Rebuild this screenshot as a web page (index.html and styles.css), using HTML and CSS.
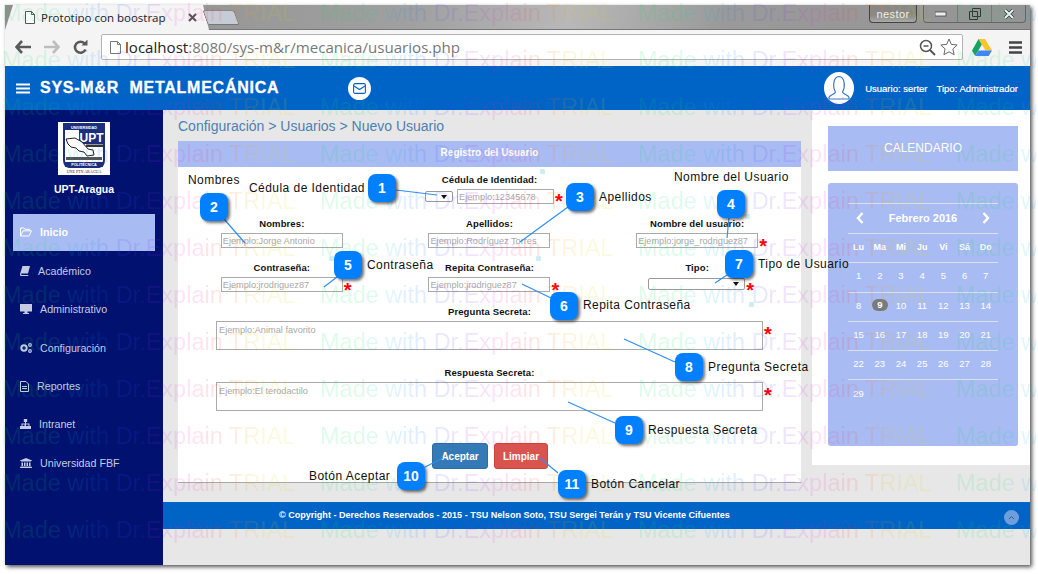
FILE: index.html
```html
<!DOCTYPE html>
<html lang="es">
<head>
<meta charset="utf-8">
<title>Prototipo con boostrap</title>
<link rel="stylesheet" href="styles.css">
</head>
<body>
<div class="window">
  <header class="chrome">
    <div class="tabstrip">
      <div class="tab">
        <svg class="tab-doc" width="10" height="13" viewBox="0 0 10 13"><path d="M.5.5h6l3 3v9h-9zM6.5.5v3h3" fill="#fff" stroke="#555"/></svg>
        <span class="tab-title">Prototipo con boostrap</span>
        <svg class="tab-x" width="9" height="9" viewBox="0 0 9 9"><path d="M1 1l7 7M8 1l-7 7" stroke="#555" stroke-width="2"/></svg>
      </div>
      <div class="newtab"></div>
      <div class="strip-space"></div>
      <div class="user-badge">nestor</div>
      <div class="win-btns">
        <span class="win-btn"><svg width="12" height="6" viewBox="0 0 12 6"><rect x="0" y="1" width="11" height="4" fill="#eee" stroke="#444" stroke-width=".8"/></svg></span>
        <span class="win-btn"><svg width="12" height="12" viewBox="0 0 12 12"><path d="M3.500.5h8v8h-8zM.5 3.500h8v8h-8z" fill="none" stroke="#333"/></svg></span>
        <span class="win-btn win-close"><svg width="12" height="10" viewBox="0 0 12 10"><path d="M2 1l8 8M10 1L2 9" stroke="#333" stroke-width="3.400"/><path d="M2 1l8 8M10 1L2 9" stroke="#f4f4f4" stroke-width="2"/></svg></span>
      </div>
    </div>
    <div class="toolbar">
      <svg class="tool" width="16" height="14" viewBox="0 0 16 14"><path d="M7 1L1.500 7 7 13M2 7h14" fill="none" stroke="#5a5a5a" stroke-width="2.600"/></svg>
      <svg class="tool" width="16" height="14" viewBox="0 0 16 14"><path d="M9 1l5.500 6L9 13M14 7H0" fill="none" stroke="#bdbdbd" stroke-width="2.600"/></svg>
      <svg class="tool" width="15" height="15" viewBox="0 0 15 15"><path d="M12.500 9.500A5.500 5.500 0 1 1 11.500 3.500" fill="none" stroke="#5a5a5a" stroke-width="2.600"/><path d="M8.500 5.500h6v-6z" fill="#5a5a5a"/></svg>
      <div class="omnibox">
        <svg width="11" height="13" viewBox="0 0 11 13"><path d="M.5.5h7l3 3v9H.5zM7.500.5v3h3" fill="#fff" stroke="#777"/></svg>
        <span class="url"><span class="url-host">localhost</span>:8080/sys-m&amp;r/mecanica/usuarios.php</span>
        <svg class="omni-zoom" width="17" height="17" viewBox="0 0 17 17"><circle cx="7" cy="7" r="5.500" fill="none" stroke="#555" stroke-width="1.500"/><path d="M4.500 7h5" stroke="#555" stroke-width="1.500"/><path d="M11 11l5 5" stroke="#555" stroke-width="2"/></svg>
        <svg width="18" height="18" viewBox="0 0 18 18"><path d="M9 1l2.400 5.400 5.800.6-4.300 3.900 1.200 5.800L9 13.800l-5.100 2.900 1.200-5.800L.8 7l5.800-.6z" fill="#fff" stroke="#666"/></svg>
      </div>
      <svg class="drive" width="20" height="17" viewBox="0 0 20 17"><path d="M6.500 0h6.500l7 11.500h-6.500z" fill="#f7c52c"/><path d="M6.500 0L0 11.500 3.200 17 9.800 5.500z" fill="#19a15f"/><path d="M3.200 17h13.500l3.300-5.500H6.500z" fill="#4285f4"/></svg>
      <svg class="menu-ico" width="13" height="13" viewBox="0 0 13 13"><path d="M0 1.500h13M0 6.500h13M0 11.500h13" stroke="#444" stroke-width="2.600"/></svg>
    </div>
  </header>

  <div class="topbar">
    <svg class="burger" width="14" height="11" viewBox="0 0 14 11"><path d="M0 1.500h14M0 5.500h14M0 9.500h14" stroke="#fff" stroke-width="2"/></svg>
    <span class="brand">SYS-M&amp;R&nbsp; METALMECÁNICA</span>
    <span class="mail"><svg width="13" height="11" viewBox="0 0 13 11"><rect x=".6" y=".6" width="11.800" height="9.800" rx="1.500" fill="none" stroke="#0063c6" stroke-width="1.100"/><path d="M1 3l5.500 3.500L12 3" fill="none" stroke="#0063c6" stroke-width="1.100"/></svg></span>
    <span class="avatar"><svg width="22" height="26" viewBox="0 0 22 26"><path d="M7.500 17C4.500 12 5 2 11 1.500 17 2 17.500 12 14.500 17c0 2 6.500 3 6.500 5.500v1.500H1v-1.500C1 20 7.500 19 7.500 17z" fill="none" stroke="#3b78c4" stroke-width="1.200"/></svg></span>
    <span class="user-info">Usuario: serter</span>
    <span class="user-info">Tipo: Administrador</span>
  </div>

  <div class="body-row">
    <aside class="sidebar">
      <svg class="logo" width="52" height="53" viewBox="0 0 52 53">
        <rect width="52" height="53" fill="#fff"/>
        <path d="M6 2h40v36c0 5-2 6-5 7H11c-3-1-5-2-5-7z" fill="#fff" stroke="#1c2f7c" stroke-width="2"/>
        <rect x="6" y="2" width="40" height="6" fill="#1c2f7c"/>
        <text x="26" y="6.800" class="logo-small">UNIVERSIDAD</text>
        <rect x="21" y="8" width="25" height="14" fill="#1c2f7c"/>
        <text x="33.500" y="20" class="logo-upt">UPT</text>
        <path d="M8 17l9-1 7 4 6 7 5 1 1 5-7 1-3-4-5-1-3-3-5-1-3-3z" fill="#fff" stroke="#222" stroke-width="1"/>
        <rect x="28" y="22.500" width="17" height="2.500" fill="#333"/>
        <rect x="8" y="35" width="36" height="3" fill="#555"/>
        <rect x="7" y="40" width="38" height="5" fill="#1c2f7c"/>
        <text x="26" y="44" class="logo-small">POLITÉCNICA</text>
        <text x="26" y="51" class="logo-tiny">UNE PTN  ARAGUA</text>
      </svg>
      <div class="school">UPT-Aragua</div>
      <nav class="nav">
        <a class="nav-item active"><svg width="12" height="10" viewBox="0 0 12 10"><path d="M.5 9V1h3.500l1 1.300h4.500v1.500M.5 9L3 3.800h8.500L9 9z" fill="none" stroke="#fff" stroke-width="1"/></svg>Inicio</a>
        <a class="nav-item"><svg width="10" height="10" viewBox="0 0 10 10"><path d="M2.500 0H10L8 7.500H1.500C1 7.500 1 9 1.800 9H8.500L8 10H1C0 10 0 9 0 8z" fill="#c5cbe2"/></svg>Académico</a>
        <a class="nav-item"><svg width="12" height="10" viewBox="0 0 12 10"><path d="M0 0h12v7.500H0zM4.500 7.500h3V9H9v1H3V9h1.500z" fill="#c5cbe2"/></svg>Administrativo</a>
        <a class="nav-item"><svg width="12" height="10" viewBox="0 0 12 10"><circle cx="4" cy="5" r="2.700" fill="none" stroke="#c5cbe2" stroke-width="2"/><circle cx="10" cy="2" r="1.300" fill="none" stroke="#c5cbe2" stroke-width="1.200"/><circle cx="10" cy="8" r="1.300" fill="none" stroke="#c5cbe2" stroke-width="1.200"/></svg>Configuración</a>
        <a class="nav-item"><svg width="9" height="11" viewBox="0 0 9 11"><path d="M.5.5h5.500l2.500 2.500v7.500H.500zM2 5.500h5M2 7.500h5" fill="none" stroke="#c5cbe2"/></svg>Reportes</a>
        <a class="nav-item"><svg width="11" height="10" viewBox="0 0 11 10"><path d="M3.800 0h3.400v3H6v1.500h3.500V7h1.500v3H7V7h1.500V5.500h-2.500V7h1v3H3.500V7h1V5.500H2.500V7H4v3H0V7h1.500V4.500H5V3H3.800z" fill="#c5cbe2"/></svg>Intranet</a>
        <a class="nav-item"><svg width="12" height="10" viewBox="0 0 12 10"><path d="M6 0l6 2.500V3H0v-.5zM1 3.500h10V4H1zM1.500 4.500h1.500v3.500H1.500zM4 4.500h1.500v3.500H4zM6.500 4.500H8v3.500H6.500zM9 4.500h1.500v3.500H9zM.5 8.500h11v.7H.5zM0 9.300h12v.7H0z" fill="#c5cbe2"/></svg>Universidad FBF</a>
      </nav>
    </aside>

    <main class="content">
      <div class="columns">
        <section class="main-col">
          <div class="crumbs">Configuración &gt; Usuarios &gt; Nuevo Usuario</div>
          <form class="panel">
            <div class="panel-head">Registro del Usuario</div>
            <div class="form-row single">
              <div class="field">
                <label class="lbl">Cédula de Identidad:</label>
                <div class="ctl">
                  <div class="sel-wrap sel-small"><select class="sel"></select><i class="caret"></i></div>
                  <input class="inp inp-id" placeholder="Ejemplo:12345678">
                  <span class="star star-first">*</span>
                </div>
              </div>
            </div>
            <div class="form-row triple">
              <div class="field">
                <label class="lbl">Nombres:</label>
                <div class="ctl"><input class="inp" placeholder="Ejemplo:Jorge Antonio"></div>
              </div>
              <div class="field">
                <label class="lbl">Apellidos:</label>
                <div class="ctl"><input class="inp" placeholder="Ejemplo:Rodríguez Torres"></div>
              </div>
              <div class="field">
                <label class="lbl">Nombre del usuario:</label>
                <div class="ctl"><input class="inp" placeholder="Ejemplo:jorge_rodriguez87"><span class="star">*</span></div>
              </div>
            </div>
            <div class="form-row triple">
              <div class="field">
                <label class="lbl">Contraseña:</label>
                <div class="ctl"><input class="inp" placeholder="Ejemplo:jrodriguez87"><span class="star">*</span></div>
              </div>
              <div class="field">
                <label class="lbl">Repita Contraseña:</label>
                <div class="ctl"><input class="inp" placeholder="Ejemplo:jrodriguez87"><span class="star">*</span></div>
              </div>
              <div class="field">
                <label class="lbl">Tipo:</label>
                <div class="ctl"><div class="sel-wrap sel-wide"><select class="sel"></select><i class="caret"></i></div><span class="star">*</span></div>
              </div>
            </div>
            <div class="form-row single">
              <div class="field">
                <label class="lbl">Pregunta Secreta:</label>
                <div class="ctl"><textarea class="area" placeholder="Ejemplo:Animal favorito"></textarea><span class="star">*</span></div>
              </div>
            </div>
            <div class="form-row single row-gap-lg">
              <div class="field">
                <label class="lbl">Respuesta Secreta:</label>
                <div class="ctl"><textarea class="area" placeholder="Ejemplo:El terodactilo"></textarea><span class="star">*</span></div>
              </div>
            </div>
            <div class="actions">
              <button type="button" class="btn btn-ok">Aceptar</button>
              <button type="button" class="btn btn-clear">Limpiar</button>
            </div>
          </form>
        </section>
        <aside class="side-col">
          <div class="cal-title">CALENDARIO</div>
          <div class="cal">
            <div class="cal-nav">
              <svg width="8" height="12" viewBox="0 0 8 12"><path d="M6.500 1L2 6l4.500 5" fill="none" stroke="#fff" stroke-width="2.400"/></svg>
              <span class="cal-month">Febrero 2016</span>
              <svg width="8" height="12" viewBox="0 0 8 12"><path d="M1.500 1L6 6l-4.500 5" fill="none" stroke="#fff" stroke-width="2.400"/></svg>
            </div>
            <div class="cal-row cal-names"><span>Lu</span><span>Ma</span><span>Mi</span><span>Ju</span><span>Vi</span><span>Sá</span><span>Do</span></div>
            <div class="cal-row"><span>1</span><span>2</span><span>3</span><span>4</span><span>5</span><span>6</span><span>7</span></div>
            <div class="cal-row"><span>8</span><span><b class="today">9</b></span><span>10</span><span>11</span><span>12</span><span>13</span><span>14</span></div>
            <div class="cal-row"><span>15</span><span>16</span><span>17</span><span>18</span><span>19</span><span>20</span><span>21</span></div>
            <div class="cal-row"><span>22</span><span>23</span><span>24</span><span>25</span><span>26</span><span>27</span><span>28</span></div>
            <div class="cal-row"><span>29</span></div>
          </div>
        </aside>
      </div>
      <footer class="footer">
        <span class="foot-text">© Copyright - Derechos Reservados - 2015 - TSU Nelson Soto, TSU Sergei Terán y TSU Vicente Cifuentes</span>
        <span class="to-top"><svg width="7" height="5" viewBox="0 0 7 5"><path d="M1 4l2.500-2.500L6 4" fill="none" stroke="#3a5f8f" stroke-width="1"/></svg></span>
      </footer>
    </main>
  </div>
</div>

<div class="watermark" aria-hidden="true">
  <div class="wm-row"><span>Made with Dr.Explain TRIAL</span><span>Made with Dr.Explain TRIAL</span><span>Made with Dr.Explain TRIAL</span><span>Made w</span></div>
  <div class="wm-row"><span>Made with Dr.Explain TRIAL</span><span>Made with Dr.Explain TRIAL</span><span>Made with Dr.Explain TRIAL</span><span>Made w</span></div>
  <div class="wm-row"><span>Made with Dr.Explain TRIAL</span><span>Made with Dr.Explain TRIAL</span><span>Made with Dr.Explain TRIAL</span><span>Made w</span></div>
  <div class="wm-row"><span>Made with Dr.Explain TRIAL</span><span>Made with Dr.Explain TRIAL</span><span>Made with Dr.Explain TRIAL</span><span>Made w</span></div>
  <div class="wm-row"><span>Made with Dr.Explain TRIAL</span><span>Made with Dr.Explain TRIAL</span><span>Made with Dr.Explain TRIAL</span><span>Made w</span></div>
  <div class="wm-row"><span>Made with Dr.Explain TRIAL</span><span>Made with Dr.Explain TRIAL</span><span>Made with Dr.Explain TRIAL</span><span>Made w</span></div>
  <div class="wm-row"><span>Made with Dr.Explain TRIAL</span><span>Made with Dr.Explain TRIAL</span><span>Made with Dr.Explain TRIAL</span><span>Made w</span></div>
  <div class="wm-row"><span>Made with Dr.Explain TRIAL</span><span>Made with Dr.Explain TRIAL</span><span>Made with Dr.Explain TRIAL</span><span>Made w</span></div>
  <div class="wm-row"><span>Made with Dr.Explain TRIAL</span><span>Made with Dr.Explain TRIAL</span><span>Made with Dr.Explain TRIAL</span><span>Made w</span></div>
  <div class="wm-row"><span>Made with Dr.Explain TRIAL</span><span>Made with Dr.Explain TRIAL</span><span>Made with Dr.Explain TRIAL</span><span>Made w</span></div>
  <div class="wm-row"><span>Made with Dr.Explain TRIAL</span><span>Made with Dr.Explain TRIAL</span><span>Made with Dr.Explain TRIAL</span><span>Made w</span></div>
  <div class="wm-row"><span>Made with Dr.Explain TRIAL</span><span>Made with Dr.Explain TRIAL</span><span>Made with Dr.Explain TRIAL</span><span>Made w</span></div>
</div>

<div class="notes">
  <svg class="leaders" width="1038" height="574" viewBox="0 0 1038 574">
    <path d="M396 190L437 195M224 219L245 243M568 207L520 242M729 218L727 238M337 277L324 287M522 284L551 298M727 275L715 283M675 362L624 339M615 423L568 402M425 467L443 458M558 473L540 458"/>
  </svg>
  <i class="dot d1"></i><i class="dot d2"></i><i class="dot d3"></i><i class="dot d4"></i><i class="dot d5"></i><i class="dot d6"></i>
  <span class="bubble b1">1</span><span class="bubble b2">2</span><span class="bubble b3">3</span><span class="bubble b4">4</span><span class="bubble b5">5</span><span class="bubble b6">6</span><span class="bubble b7">7</span><span class="bubble b8">8</span><span class="bubble b9">9</span><span class="bubble b10">10</span><span class="bubble b11">11</span>
  <span class="note n1">Cédula de Identidad</span>
  <span class="note n2">Nombres</span>
  <span class="note n3">Apellidos</span>
  <span class="note n4">Nombre del Usuario</span>
  <span class="note n5">Contraseña</span>
  <span class="note n6">Repita Contraseña</span>
  <span class="note n7">Tipo de Usuario</span>
  <span class="note n8">Pregunta Secreta</span>
  <span class="note n9">Respuesta Secreta</span>
  <span class="note n10">Botón Aceptar</span>
  <span class="note n11">Botón Cancelar</span>
</div>
</body>
</html>
```
FILE: styles.css
```css
* { box-sizing: border-box; }
html, body { margin: 0; height: 100%; }
body {
  position: relative;
  width: 1038px;
  height: 574px;
  overflow: hidden;
  background: #fff;
  font-family: "Liberation Sans", Arial, sans-serif;
  color: #111;
}
.window {
  margin: 5px 0 0 5px;
  width: 1025px;
  height: 560px;
  display: flex;
  flex-direction: column;
  box-shadow: 2px 2px 4px #555;
}

/* browser chrome */
.chrome { height: 61px; flex: none; display: flex; flex-direction: column; }
.tabstrip {
  height: 25px;
  display: flex;
  align-items: flex-start;
  background: linear-gradient(100deg, #8e8e8e 0%, #a0a0a0 40%, #b8b8b8 55%, #9a9a9a 70%, #949494 100%);
  border-bottom: 1px solid #777;
}
.tab {
  width: 204px;
  height: 25px;
  flex: none;
  display: flex;
  align-items: center;
  padding: 0 12px 0 20px;
  background: #f4f4f4;
  clip-path: polygon(0 100%, 8px 0, 198px 0, 100% 100%);
}
.tab-doc { flex: none; margin-right: 6px; }
.tab-title { flex: 1; font: 11.500px "Open Sans", sans-serif; color: #222; white-space: nowrap; }
.tab-x { flex: none; }
.newtab {
  width: 32px;
  height: 15px;
  margin: 5px 0 0 -4px;
  background: #c6ccd6;
  border: 1px solid #777;
  border-top-color: #888;
  border-radius: 3px 3px 2px 2px;
  transform: skewX(20deg);
}
.strip-space { flex: 1; }
.user-badge {
  width: 48px;
  height: 18px;
  margin-right: 6px;
  border: 1px solid #444;
  border-top: 0;
  border-radius: 0 0 4px 4px;
  background: linear-gradient(#888 0 60%, #aaa);
  color: #f1f1f1;
  font: 11px/18px "Liberation Sans", sans-serif;
  letter-spacing: .4px;
  text-align: center;
}
.win-btns {
  width: 103px;
  height: 18px;
  margin-right: 4px;
  display: flex;
  border: 1px solid #666;
  border-top: 0;
  border-radius: 0 0 4px 4px;
}
.win-btn {
  flex: 1;
  display: flex;
  align-items: center;
  justify-content: center;
  border-left: 1px solid #777;
}
.win-btn:first-child { border-left: 0; }
.toolbar {
  height: 36px;
  display: flex;
  align-items: center;
  padding: 0 11px 2px 9px;
  background: #f4f4f4;
}
.tool { flex: none; margin-right: 13px; }
.tool:first-child { margin-left: 1px; }
.omnibox {
  width: 862px;
  height: 26px;
  flex: none;
  display: flex;
  align-items: center;
  gap: 4px;
  padding: 0 4px 0 8px;
  background: #fff;
  border: 1px solid #b4b4b4;
  border-radius: 2px;
}
.url { flex: 1; font: 15.100px "Open Sans", sans-serif; color: #777; white-space: nowrap; }
.url-host { color: #222; }
.drive { flex: none; margin-left: 9px; }
.menu-ico { flex: none; margin-left: 17px; }

/* top bar */
.topbar {
  height: 44px;
  flex: none;
  display: flex;
  align-items: center;
  padding: 0 12px 0 11px;
  background: #0063c6;
  color: #fff;
}
.burger { flex: none; margin-right: 10px; }
.brand { font-weight: bold; font-size: 16px; letter-spacing: .75px; white-space: nowrap; -webkit-text-stroke: .3px #fff; }
.mail {
  width: 23px;
  height: 23px;
  margin-left: 69px;
  border-radius: 50%;
  background: #fff;
  display: flex;
  align-items: center;
  justify-content: center;
}
.avatar {
  width: 30px;
  height: 32px;
  margin-left: auto;
  margin-right: 11px;
  border-radius: 50%;
  background: #fff;
  display: flex;
  align-items: center;
  justify-content: center;
}
.user-info { font-size: 9.500px; margin-right: 9px; white-space: nowrap; -webkit-text-stroke: .2px #fff; }
.user-info:last-child { margin-right: 0; }

/* layout */
.body-row { flex: 1; min-height: 0; display: flex; }
.sidebar { width: 158px; flex: none; background: #001170; padding-top: 12px; text-align: center; }
.logo { display: block; margin: 0 auto 0 53px; }
.logo-small { font: bold 3.800px "Liberation Sans", sans-serif; fill: #fff; text-anchor: middle; }
.logo-upt { font: bold 12px "Liberation Sans", sans-serif; fill: #fff; text-anchor: middle; }
.logo-tiny { font: 4px "Liberation Serif", serif; fill: #222; text-anchor: middle; }
.school { margin: 7px 0 18px; font-size: 10.500px; font-weight: bold; color: #fff; line-height: 14px; }
.nav { display: flex; flex-direction: column; padding: 0 8px; }
.nav-item {
  height: 38.300px;
  display: flex;
  align-items: center;
  gap: 8px;
  padding-left: 7px;
  color: #c5cbe2;
  font-size: 10.700px;
}
.nav-item.active { background: #a9bbf3; color: #fff; font-weight: bold; height: 37px; margin-bottom: 1px; padding-bottom: 2px; }
.nav-item svg { flex: none; }

.content { flex: 1; min-width: 0; display: flex; flex-direction: column; background: #e7e7e7; }
.columns { height: 392px; flex: none; display: flex; }
.main-col { width: 649px; flex: none; padding: 0 11px 0 15px; }
.crumbs { height: 31px; font-size: 14px; line-height: 32px; color: #4d7fb3; }
.panel {
  background: #fff;
  border-bottom: 1px solid #aaa;
  padding-bottom: 13px;
}
.panel-head {
  height: 26px;
  background: #a9bbf3;
  color: #fff;
  font-size: 10px;
  font-weight: bold;
  line-height: 23px;
  text-align: center;
}
.form-row { margin-top: 13px; }
.form-row.triple { display: grid; grid-template-columns: repeat(3, 1fr); }
.panel-head + .form-row { margin-top: 6px; }
.row-gap-lg { margin-top: 16px; }
.field { display: flex; flex-direction: column; align-items: center; }
.lbl { height: 13px; margin-bottom: 3px; font-size: 9.500px; font-weight: bold; line-height: 14px; letter-spacing: .1px; color: #111; }
.ctl { position: relative; display: flex; align-items: flex-start; gap: 4px; }
.inp {
  width: 122px;
  height: 15px;
  padding: 0 1px;
  border: 1px solid #aaa;
  border-radius: 0;
  font: 9.200px "Liberation Sans", sans-serif;
  outline: 0;
}
.inp-id { width: 97px; }
.inp::placeholder, .area::placeholder { color: #a9a9a9; opacity: 1; }
.area {
  display: block;
  width: 547px;
  height: 29px;
  padding: 3px 2px 2px;
  border: 1px solid #aaa;
  border-radius: 0;
  resize: none;
  font: 9.200px "Liberation Sans", sans-serif;
  outline: 0;
}
.sel-wrap { position: relative; flex: none; }
.sel-small { width: 28px; height: 11px; margin-top: 2px; }
.sel-wide { width: 97px; height: 12px; margin-top: 1px; margin-left: -1px; }
.sel {
  display: block;
  appearance: none;
  width: 100%;
  height: 100%;
  padding: 0;
  border: 1px solid #999;
  border-radius: 2px;
  background: #fff;
}
.caret {
  position: absolute;
  right: 6px;
  top: 4px;
  border: 3px solid transparent;
  border-top: 4px solid #111;
  border-bottom: 0;
}
.star {
  position: absolute;
  left: 100%;
  top: 3px;
  margin-left: 1px;
  color: #f00;
  font-size: 20px;
  font-weight: bold;
  line-height: 20px;
}
.star-first { top: 2px; }
.actions { display: flex; justify-content: flex-start; gap: 6px; margin-top: 32px; padding-left: 254px; }
.btn {
  height: 26px;
  padding: 0;
  border: 1px solid transparent;
  border-radius: 3px;
  color: #fff;
  font: bold 10px "Liberation Sans", sans-serif;
}
.btn-ok { width: 56px; background: #337ab7; border-color: #2e6da4; }
.btn-clear { width: 54px; background: #d9534f; border-color: #d43f3a; }

/* calendar column */
.side-col { width: 218px; height: 355px; flex: none; padding: 16px 12px 0 16px; background: #fff; }
.cal-title {
  height: 45px;
  background: #a9bbf3;
  color: #fff;
  font-size: 12px;
  line-height: 45px;
  text-align: center;
}
.cal {
  height: 263px;
  margin-top: 12px;
  padding: 20px 20px 0;
  border-radius: 3px;
  background: #a9bbf3;
  color: #fff;
}
.cal-nav {
  height: 30px;
  display: flex;
  align-items: center;
  justify-content: space-between;
  padding: 0 8px 2px;
  border-top: 1px solid #dbe0ee;
}
.cal-month { font-size: 11px; font-weight: bold; }
.cal-row {
  height: 29.300px;
  display: grid;
  grid-template-columns: repeat(7, 21.200px);
  align-items: center;
  justify-items: center;
  padding-bottom: 3px;
  border-top: 1px solid #dbe0ee;
  font-size: 9.500px;
}
.cal-names { font-weight: bold; font-size: 9px; }
.today {
  display: block;
  width: 16px;
  height: 12px;
  border-radius: 6px;
  background: #7a7a7a;
  line-height: 12px;
  text-align: center;
}

/* footer */
.footer {
  height: 27px;
  display: flex;
  align-items: center;
  padding: 0 11px 0 116px;
  background: #0063c6;
  color: #fff;
}
.foot-text { flex: 1; font-size: 9.060px; font-weight: bold; line-height: 27px; white-space: nowrap; }
.to-top {
  width: 15px;
  height: 15px;
  margin-top: 3px;
  border-radius: 50%;
  background: #6d9fdc;
  display: flex;
  align-items: center;
  justify-content: center;
}

/* watermark laid over the whole capture */
.watermark {
  position: absolute;
  left: 2px;
  top: -10px;
  width: 1036px;
  display: flex;
  flex-direction: column;
  pointer-events: none;
  opacity: .12;
}
.wm-row { height: 47px; display: flex; flex: none; }
.wm-row span {
  width: 318px;
  flex: none;
  font-size: 23.500px;
  line-height: 47px;
  white-space: nowrap;
  background: linear-gradient(90deg, #00e05a 0 14%, #00c8e8 22%, #1464ff 35%, #7a28ff 48%, #ff20d0 62%, #ff2828 72%, #ff9a00 82%, #d8d800 90%);
  background-size: 295px 100%;
  background-repeat: no-repeat;
  -webkit-background-clip: text;
  background-clip: text;
  color: transparent;
}
.wm-row span:last-child { width: 80px; }

/* numbered callouts over the page */
.notes { position: absolute; inset: 0; pointer-events: none; }
.leaders { position: absolute; left: 0; top: 0; }
.leaders path { fill: none; stroke: #2f8ff0; stroke-width: 1.200; }
.bubble {
  position: absolute;
  width: 28px;
  height: 28px;
  border-radius: 8px;
  background: #0080ff;
  box-shadow: 2px 2px 3px rgba(0, 0, 0, .55);
  color: #fff;
  font-size: 14px;
  font-weight: bold;
  line-height: 28px;
  text-align: center;
}
.b1 { left: 368px; top: 174px; }
.b2 { left: 200px; top: 193px; }
.b3 { left: 566px; top: 183px; }
.b4 { left: 717px; top: 190px; }
.b5 { left: 334px; top: 251px; }
.b6 { left: 550px; top: 292px; }
.b7 { left: 725px; top: 250px; }
.b8 { left: 675px; top: 353px; }
.b9 { left: 615px; top: 416px; }
.b10 { left: 397px; top: 462px; }
.b11 { left: 558px; top: 470px; }
.note { position: absolute; font-size: 12px; line-height: 14px; letter-spacing: .45px; color: #111; white-space: nowrap; }
.n1 { left: 249px; top: 181px; }
.n2 { left: 188px; top: 173px; }
.n3 { left: 599px; top: 190px; }
.n4 { left: 674px; top: 170px; }
.n5 { left: 367px; top: 258px; }
.n6 { left: 583px; top: 298px; }
.n7 { left: 758px; top: 257px; }
.n8 { left: 708px; top: 360px; }
.n9 { left: 648px; top: 423px; }
.n10 { left: 309px; top: 469px; }
.n11 { left: 591px; top: 477px; }
.dot { position: absolute; width: 5px; height: 5px; border-radius: 1px; background: #cfeef0; }
.d1 { left: 540px; top: 169px; }
.d2 { left: 329px; top: 256px; }
.d3 { left: 536px; top: 256px; }
.d4 { left: 749px; top: 302px; }
.d5 { left: 745px; top: 214px; }
.d6 { left: 750px; top: 361px; }
```
